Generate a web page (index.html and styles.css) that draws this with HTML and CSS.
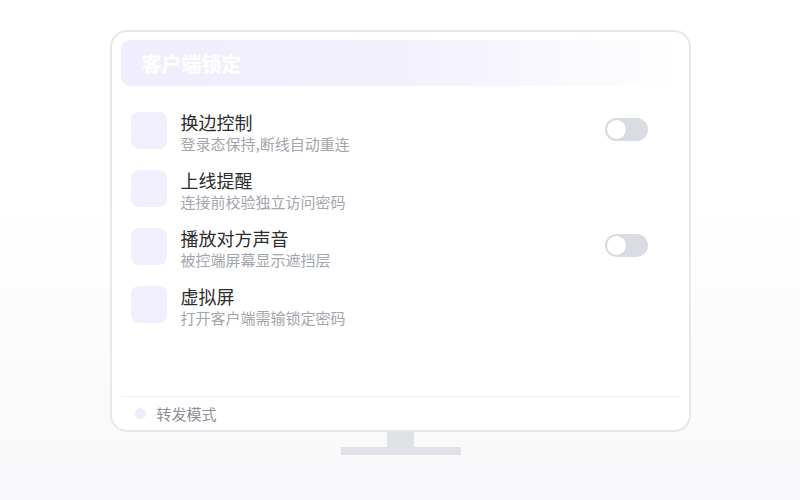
FILE: index.html
```html
<!DOCTYPE html>
<html lang="zh">
<head>
<meta charset="utf-8">
<title>客户端锁定</title>
<link rel="stylesheet" href="styles.css">
</head>
<body>
<div class="page">
  <div class="monitor">
    <div class="header"><span class="header-title">客户端锁定</span></div>
    <div class="list">
      <div class="row">
        <div class="icon"></div>
        <div class="texts">
          <div class="title">换边控制</div>
          <div class="sub">登录态保持,断线自动重连</div>
        </div>
        <div class="toggle"><span class="knob"></span></div>
      </div>
      <div class="row">
        <div class="icon"></div>
        <div class="texts">
          <div class="title">上线提醒</div>
          <div class="sub">连接前校验独立访问密码</div>
        </div>
      </div>
      <div class="row">
        <div class="icon"></div>
        <div class="texts">
          <div class="title">播放对方声音</div>
          <div class="sub">被控端屏幕显示遮挡层</div>
        </div>
        <div class="toggle"><span class="knob"></span></div>
      </div>
      <div class="row">
        <div class="icon"></div>
        <div class="texts">
          <div class="title">虚拟屏</div>
          <div class="sub">打开客户端需输锁定密码</div>
        </div>
      </div>
    </div>
    <div class="footer">
      <span class="dot"></span>
      <span class="footer-text">转发模式</span>
    </div>
  </div>
  <div class="neck"></div>
  <div class="base"></div>
</div>
</body>
</html>
```

FILE: styles.css
```css
html, body {
  margin: 0;
  padding: 0;
}
body {
  font-family: "Noto Sans CJK SC", "Noto Sans", sans-serif;
  background: linear-gradient(180deg, #ffffff 0%, #ffffff 40%, #f8f8fa 100%);
  width: 800px;
  height: 500px;
  overflow: hidden;
}
.page {
  display: flex;
  flex-direction: column;
  align-items: center;
  padding-top: 30px;
}
.monitor {
  box-sizing: border-box;
  width: 581px;
  height: 402px;
  border: 2px solid #e6e8ec;
  border-radius: 17px;
  background: #ffffff;
  padding: 8px 9px 0 9px;
  display: flex;
  flex-direction: column;
}
.header {
  height: 46px;
  border-radius: 9px;
  background: linear-gradient(90deg, #f0eefd 0%, #f2f0fd 50%, rgba(246, 245, 253, 0) 100%);
  display: flex;
  align-items: center;
  padding-left: 21px;
}
.header-title {
  color: #ffffff;
  font-size: 20px;
  font-weight: 700;
}
.list {
  flex: 1;
  display: flex;
  flex-direction: column;
  gap: 18px;
  padding: 26px 32px 0 10px;
}
.row {
  display: flex;
  align-items: flex-start;
  height: 40px;
}
.icon {
  width: 36px;
  height: 37px;
  border-radius: 8px;
  background: #f1effd;
  flex: none;
}
.texts {
  flex: 1;
  margin-left: 14px;
  display: flex;
  flex-direction: column;
}
.title {
  font-size: 18px;
  line-height: 20px;
  color: #2e2e2e;
}
.sub {
  font-size: 15px;
  line-height: 20px;
  color: #a2a6ad;
  margin-top: 2px;
}
.toggle {
  position: relative;
  width: 43px;
  height: 23px;
  border-radius: 12px;
  background: #d9dce2;
  margin-top: 6px;
  flex: none;
}
.knob {
  position: absolute;
  left: 1px;
  top: 1px;
  width: 21px;
  height: 21px;
  box-sizing: border-box;
  border-radius: 50%;
  background: #ffffff;
  border: 1px solid #d3d6dc;
}
.footer {
  height: 33px;
  border-top: 1px solid #eef0f3;
  display: flex;
  align-items: center;
  padding-left: 14px;
  gap: 11px;
}
.dot {
  width: 11px;
  height: 11px;
  border-radius: 50%;
  background: #efedfd;
}
.footer-text {
  font-size: 15px;
  color: #8c9098;
}
.neck {
  width: 27px;
  height: 15px;
  background: #dfe2e7;
  margin-left: 1px;
}
.base {
  width: 120px;
  height: 8px;
  background: #dfe2e7;
  margin-left: 1px;
}
```
